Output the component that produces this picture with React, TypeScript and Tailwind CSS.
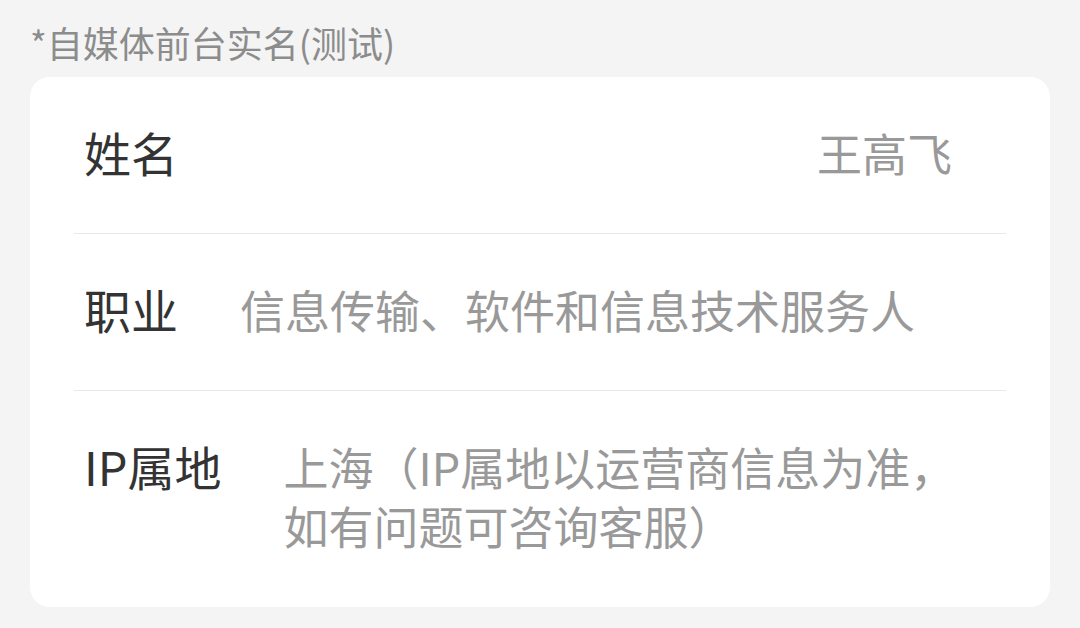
const font = { fontFamily: '"Noto Sans CJK SC", "Noto Sans", sans-serif' };

const rows = [
  { label: '姓名', value: '王高飞', right: true },
  { label: '职业', value: '信息传输、软件和信息技术服务人' },
  { label: 'IP属地', value: '上海（IP属地以运营商信息为准，\n如有问题可咨询客服）' },
];

export default function App() {
  return (
    <div className="w-[1080px] h-[628px] bg-[#f4f4f4] overflow-hidden" style={font}>
      <div className="pl-[30px] pt-[18px] text-[36px] leading-[48px] text-[#8c8c8c]">
        *自媒体前台实名(测试)
      </div>
      <div className="mt-[11px] mx-[30px] bg-white rounded-[20px] px-[44px]">
        {rows.map((row, i) => (
          <div
            key={row.label}
            className={`flex items-start pt-[46px] pl-[10px] ${
              i < rows.length - 1 ? 'pb-[51px] border-b border-[#e8e8e8]' : 'pb-[52px]'
            } ${row.right ? 'justify-between pr-[54px]' : 'gap-[62px]'}`}
          >
            <div className="text-[47px] leading-[58px] text-[#333333] shrink-0">{row.label}</div>
            <div className="text-[45px] leading-[59px] text-[#999999] whitespace-pre-line">
              {row.value}
            </div>
          </div>
        ))}
      </div>
    </div>
  );
}
